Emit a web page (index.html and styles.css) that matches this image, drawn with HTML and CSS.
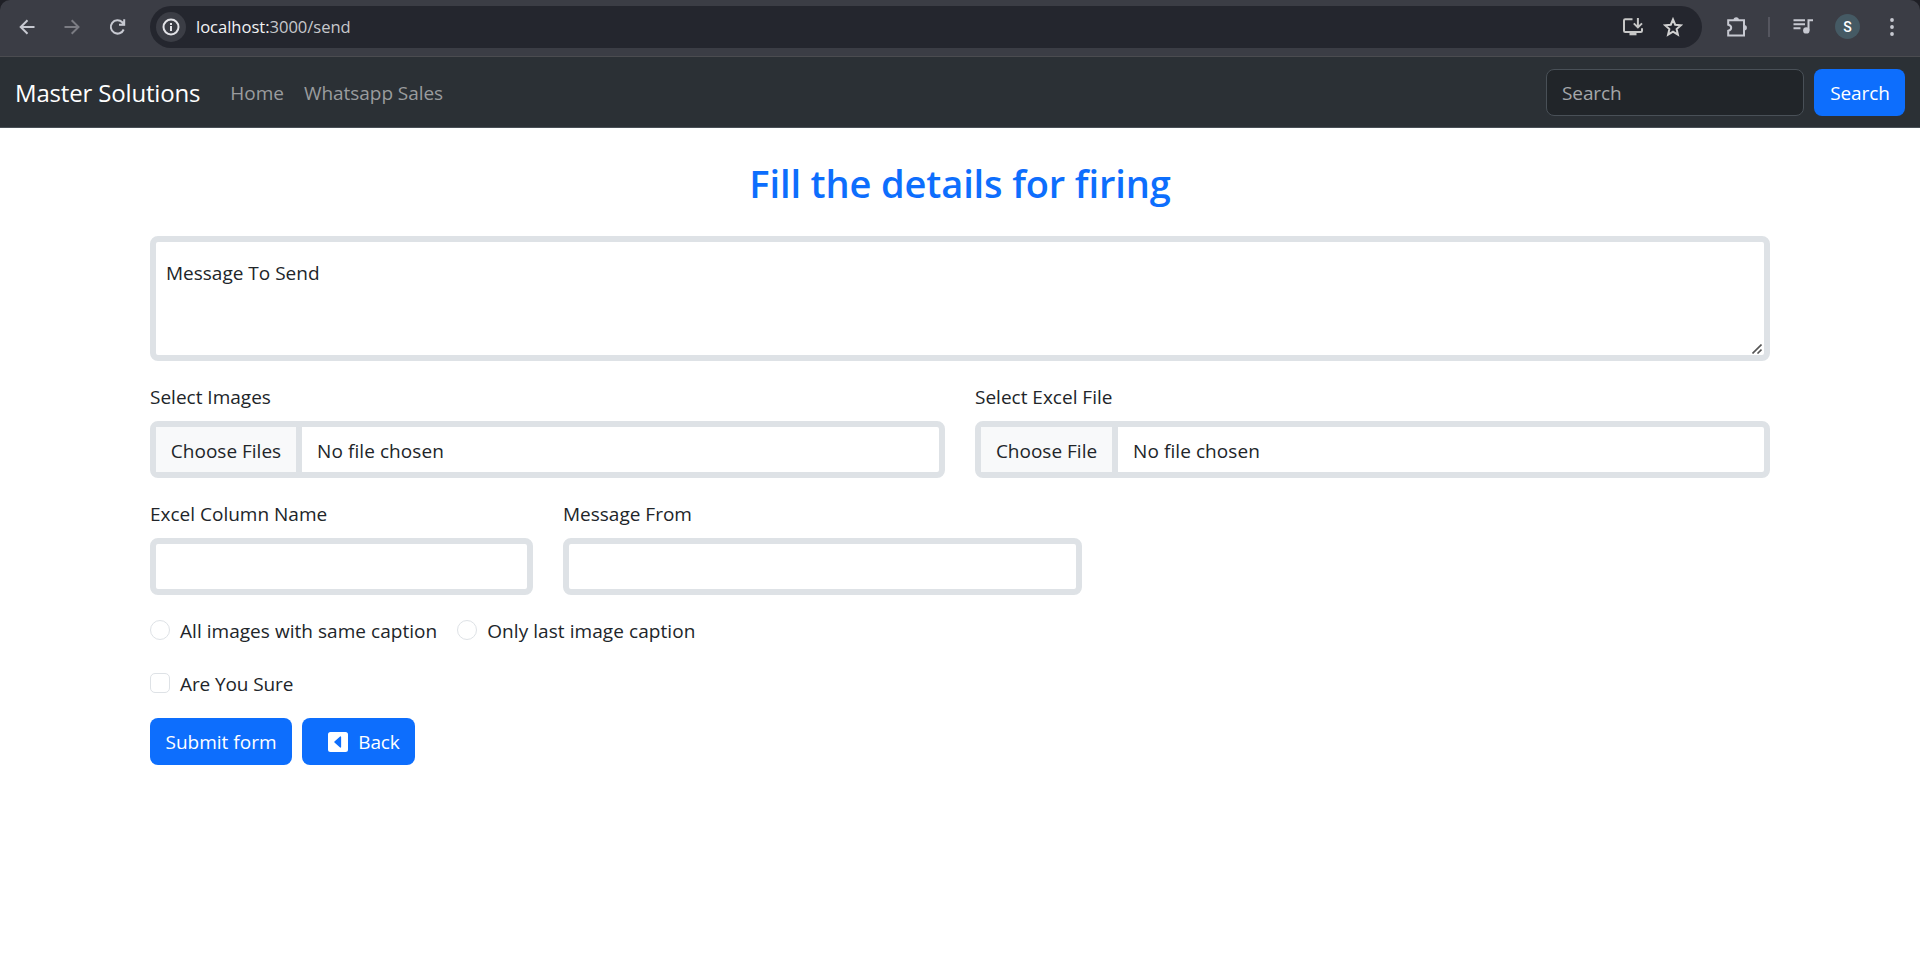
FILE: index.html
```
<!DOCTYPE html>
<html lang="en">
<head>
<meta charset="utf-8">
<title>Master Solutions</title>
<link rel="stylesheet" href="styles.css">
</head>
<body>
<div class="chrome-bar">
  <div class="toolbar">
    <svg class="tool back" viewBox="0 0 20 20"><path d="M17.500 10H4M10.500 3.200 3.700 10l6.800 6.800"/></svg>
    <svg class="tool forward" viewBox="0 0 20 20"><path d="M2.500 10H16.500M9.700 3.200l6.800 6.800-6.800 6.800"/></svg>
    <svg class="tool reload" viewBox="0 0 20 20"><path d="M15.700 12.500A6.700 6.700 0 1 1 14.300 5.200L16.200 7.200M16.200 2.200v5.600h-5.200"/><path class="solid" d="M12 8.300 17 3.500V8.300z"/></svg>
    <div class="omnibox">
      <span class="site-info"><svg viewBox="0 0 20 20"><circle cx="10" cy="10" r="7.500"/><path d="M10 9v5M10 6v1.900"/></svg></span>
      <span class="url"><b class="host">localhost:</b>3000/send</span>
      <svg class="install" viewBox="0 0 22 20"><path d="M10.500 2.200H3.200Q2 2.200 2 3.400v10.400Q2 15 3.200 15h15.600q1.200 0 1.200-1.200v-2.600M15.900 1v9M11.800 6.400l4.100 4 4.100-4"/><path class="solid" d="M7.500 15h7v3.300h-7z"/></svg>
      <svg class="star" viewBox="0 0 20 20"><path d="m10 2.400 2.200 5.300 5.700.5-4.300 3.800 1.300 5.600L10 14.600l-4.900 3 1.300-5.600L2.100 8.200l5.700-.5z"/></svg>
    </div>
    <svg class="puzzle" viewBox="0 0 22 22"><path d="M2.200 4.200H18V19.500H2.200V14.800Q5.200 14.200 5.200 11.800T2.200 8.800z"/><path class="solid" d="M7.500 4a2.700 2.700 0 0 1 5.400 0zM18.200 9a2.700 2.700 0 0 1 0 5.400z"/></svg>
    <span class="divider"></span>
    <svg class="media" viewBox="0 0 20 20"><path d="M.5 3.200h11.500M.5 7.200h11.500M.5 11.300h7M15.500 13.500V3.200H20"/><circle class="solid" cx="13.300" cy="13.400" r="3.200"/></svg>
    <span class="avatar">S</span>
    <svg class="dots" viewBox="0 0 6 20"><circle cx="3" cy="3" r="1.900"/><circle cx="3" cy="10" r="1.900"/><circle cx="3" cy="17" r="1.900"/></svg>
  </div>
</div>
<nav class="navbar">
  <span class="brand">Master Solutions</span>
  <span class="nav-link home">Home</span>
  <span class="nav-link sales">Whatsapp Sales</span>
  <div class="search-input">Search</div>
  <div class="btn search-btn">Search</div>
</nav>
<main class="container">
  <h1 class="title">Fill the details for firing</h1>
  <div class="message field">
    <span>Message To Send</span>
    <svg class="grip" viewBox="0 0 10 10"><path d="M.5 9.500l9-9M5.500 9.500l4-4"/></svg>
  </div>
  <div class="row files">
    <div class="col">
      <label class="label">Select Images</label>
      <div class="field file"><span class="choose choose-many">Choose Files</span><span class="file-name">No file chosen</span></div>
    </div>
    <div class="col">
      <label class="label">Select Excel File</label>
      <div class="field file"><span class="choose choose-one">Choose File</span><span class="file-name">No file chosen</span></div>
    </div>
  </div>
  <div class="row texts">
    <div class="col">
      <label class="label">Excel Column Name</label>
      <div class="field"></div>
    </div>
    <div class="col">
      <label class="label">Message From</label>
      <div class="field"></div>
    </div>
  </div>
  <div class="checks radios">
    <label class="check"><i class="box round"></i><span class="check-text same">All images with same caption</span></label>
    <label class="check"><i class="box round"></i><span class="check-text last">Only last image caption</span></label>
  </div>
  <div class="checks">
    <label class="check"><i class="box"></i><span class="check-text sure">Are You Sure</span></label>
  </div>
  <div class="actions">
    <div class="btn submit">Submit form</div>
    <div class="btn back-btn"><svg class="caret" viewBox="0 0 16 16"><path d="M0 2a2 2 0 0 1 2-2h12a2 2 0 0 1 2 2v12a2 2 0 0 1-2 2H2a2 2 0 0 1-2-2zm10.500 10V4a.5.5 0 0 0-.832-.374l-4.500 4a.5.5 0 0 0 0 .748l4.500 4A.5.5 0 0 0 10.500 12"/></svg><span>Back</span></div>
  </div>
</main>
</body>
</html>
```
FILE: styles.css
```
* { box-sizing: border-box; }
body {
  margin: 0;
  background: #fff;
  color: #212529;
  font: 19px/30px "Open Sans", "Noto Sans", sans-serif;
  white-space: nowrap;
}
svg { display: block; flex: none; fill: none; stroke: #c7c9d1; stroke-width: 2; }
.solid { fill: #c7c9d1; stroke: none; }
.chrome-bar { height: 57px; background: #1f2026; }
.toolbar {
  display: flex;
  align-items: center;
  height: 57px;
  padding: 0 17px 3px 17px;
  background: #3b3d45;
  border-bottom: 1px solid #4b4c50;
  border-radius: 10px 10px 0 0;
}
.tool { width: 20px; height: 20px; }
.forward { margin-left: 25px; stroke: #7b7c83; }
.reload { margin-left: 26px; }
.omnibox {
  display: flex;
  align-items: center;
  width: 1552px;
  height: 42px;
  margin-left: 22px;
  padding: 0 19px 0 6px;
  border-radius: 21px;
  background: #24262e;
}
.site-info { display: grid; place-items: center; width: 30px; height: 30px; border-radius: 50%; background: #3b3d45; }
.site-info svg { width: 20px; height: 20px; stroke: #e3e3e8; }
.url { flex: 1; margin-left: 10px; padding-top: 1px; font-size: 16.6px; letter-spacing: -0.04px; color: #c7c8cc; }
.host { font-weight: 400; color: #f2f2f4; }
.install { width: 22px; height: 20px; stroke: #c7c7c7; }
.install .solid { fill: #c7c7c7; }
.star { width: 20px; height: 20px; margin-left: 19px; stroke: #d0d0d0; }
.puzzle { width: 22px; height: 22px; margin-left: 24px; }
.divider { width: 2px; height: 20px; margin-left: 20px; background: #55565f; }
.media { width: 20px; height: 20px; margin-left: 23px; }
.avatar {
  display: grid;
  place-items: center;
  width: 25px;
  height: 25px;
  margin-left: 22px;
  border-radius: 50%;
  background: #455a64;
  color: #fff;
  font: 500 14px/1 Roboto, sans-serif;
}
.dots { width: 6px; height: 20px; margin-left: 29px; fill: #c7c9d1; stroke: none; }

.navbar {
  display: flex;
  align-items: center;
  height: 71px;
  padding: 0 15px;
  background: #2b3035;
  border-bottom: 1px solid #495057;
}
.brand { padding-top: 2px; font-size: 24px; letter-spacing: -0.17px; color: #fff; }
.nav-link { padding-top: 2px; color: #9a9c9e; margin-left: 20px; }
.home { margin-left: 30px; }
.sales { letter-spacing: -0.05px; }
.search-input {
  display: flex;
  align-items: center;
  width: 258px;
  height: 47px;
  margin-left: auto;
  padding: 2px 0 0 15px;
  border: 1px solid #495057;
  border-radius: 8px;
  background: #212529;
  color: #a4a7aa;
  letter-spacing: -0.1px;
}
.btn {
  display: flex;
  align-items: center;
  justify-content: center;
  height: 47px;
  border-radius: 8px;
  background: #0d6efd;
  color: #fff;
}
.search-btn { width: 91px; margin-left: 10px; padding: 2px 0 0 1px; letter-spacing: -0.1px; }

.container { width: 1620px; margin: 0 auto; padding-top: 30px; }
.title {
  margin: 0 0 28px;
  color: #0d6efd;
  font-size: 38px;
  line-height: 50px;
  letter-spacing: -0.13px;
  font-weight: 600;
  text-align: center;
}
.field { height: 57px; border: 6px solid #dee2e6; border-radius: 8px; background: #fff; }
.message { position: relative; height: 125px; padding: 16px 10px; }
.grip { position: absolute; right: 2px; bottom: 1px; width: 10px; height: 10px; stroke: #555; stroke-width: 1.6; }
.row { display: grid; gap: 30px; margin-top: 20px; }
.files { grid-template-columns: 1fr 1fr; }
.texts { grid-template-columns: 383px 519px; }
.label { display: block; height: 40px; padding-top: 1px; }
.file { display: flex; align-items: center; }
.choose {
  display: flex;
  align-items: center;
  justify-content: center;
  height: 45px;
  padding-top: 2px;
  margin-right: 15px;
  border-right: 6px solid #dee2e6;
  background: #f8f9fa;
}
.choose-many { width: 146px; }
.choose-one { width: 137px; }
.file-name { padding-top: 2px; letter-spacing: 0.08px; }
.checks { display: flex; gap: 20px; height: 30px; margin-top: 23px; }
.radios { margin-top: 20px; }
.check { display: flex; align-items: center; gap: 10px; }
.check-text { padding-top: 2px; }
.same { letter-spacing: 0.04px; }
.last { letter-spacing: 0.07px; }
.sure { letter-spacing: -0.1px; }
.box { width: 20px; height: 20px; border: 1px solid #dee2e6; border-radius: 5px; }
.round { border-radius: 50%; }
.actions { display: flex; gap: 10px; margin-top: 20px; }
.submit { width: 142px; }
.back-btn { width: 113px; padding-left: 11px; gap: 10px; letter-spacing: -0.1px; }
.caret { width: 20px; height: 20px; fill: #fff; stroke: none; }
```
